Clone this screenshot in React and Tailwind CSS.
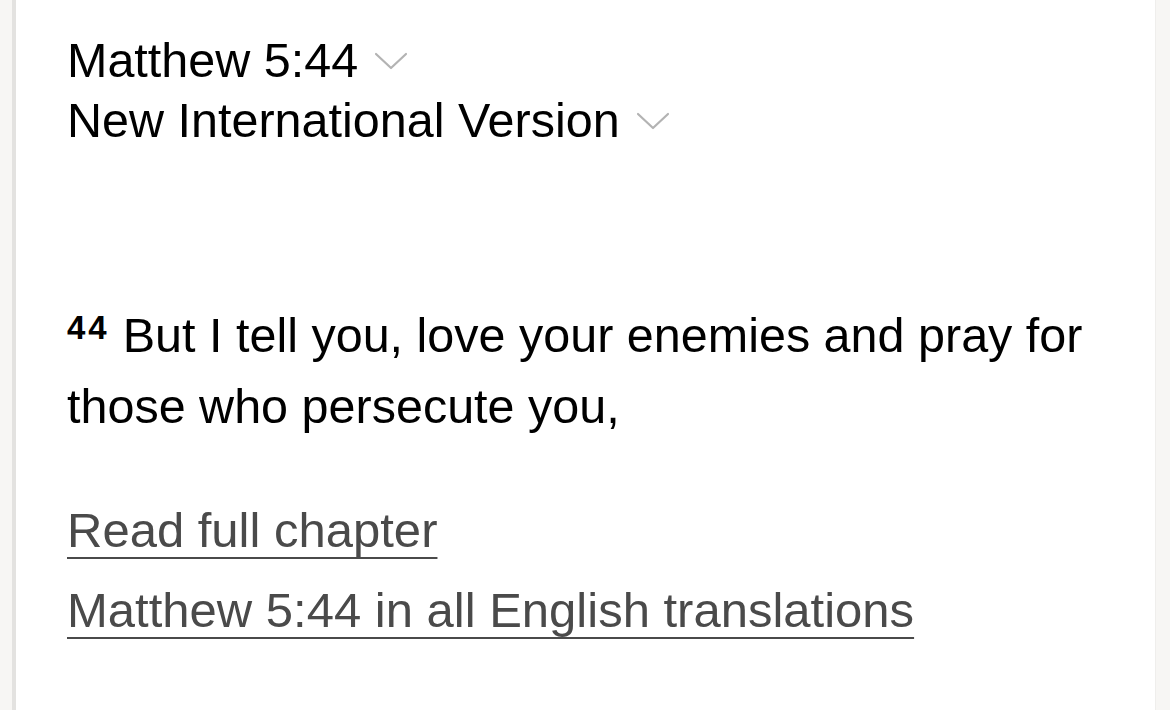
export default function App() {
  const chevron = (
    <svg className="inline-block ml-[16px] w-[34px] h-[20px] align-middle" viewBox="0 0 34 20" fill="none" stroke="#b3b3b3" strokeWidth="2.2" strokeLinecap="round" strokeLinejoin="round">
      <path d="M2 4l15 14 15-14" />
    </svg>
  );

  return (
    <div className="w-[1170px] h-[710px] bg-[#f7f6f4] flex overflow-hidden" style={{ fontFamily: '"Liberation Sans", Arial, sans-serif' }}>
      <div className="w-[12px] shrink-0" />
      <div className="flex-1 bg-white border-l-4 border-[#e3e2e0] border-r border-r-[#efeeec] pl-[51px] pt-[30px]">
        {/* Reference + version */}
        <div className="text-[48.5px] leading-[60px] text-black">
          <div className="flex items-center">
            <span>Matthew 5:44</span>
            {chevron}
          </div>
          <div className="flex items-center">
            <span>New International Version</span>
            {chevron}
          </div>
        </div>

        {/* Verse */}
        <p className="mt-[150px] text-[48.5px] leading-[71px] text-black pr-[50px]">
          <span className="text-[33px] leading-none font-bold tracking-[3px] mr-[13px] align-[13px]">44</span>
          But I tell you, love your enemies and pray for those who persecute you,
        </p>

        {/* Links */}
        <div className="mt-[48px] text-[49px] leading-[80px] text-[#4a4a4a]">
          <a href="#" className="block underline decoration-2 underline-offset-[10px] w-fit">Read full chapter</a>
          <a href="#" className="block underline decoration-2 underline-offset-[10px] w-fit">Matthew 5:44 in all English translations</a>
        </div>
      </div>
      <div className="w-[14px] shrink-0" />
    </div>
  );
}
